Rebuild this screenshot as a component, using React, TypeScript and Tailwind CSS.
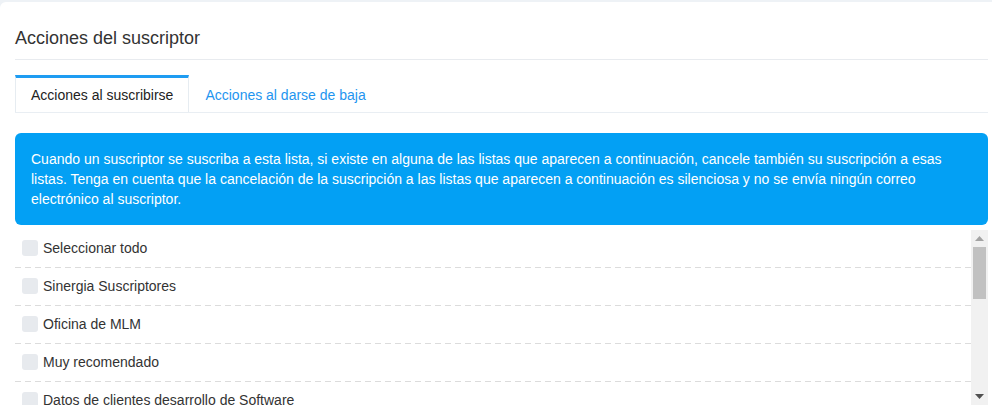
const lists = [
  "Seleccionar todo",
  "Sinergia Suscriptores",
  "Oficina de MLM",
  "Muy recomendado",
  "Datos de clientes desarrollo de Software",
];

export default function App() {
  return (
    <div className="min-h-screen bg-[#eef2f6] pt-[2px] font-['Liberation_Sans',Arial,sans-serif] text-[#333]">
      <div className="h-[417px] overflow-hidden rounded-tl-md bg-white pl-[15px] pr-[4px] pt-[24px]">
        {/* Title */}
        <div className="border-b border-[#e8ebef] pb-[9px]">
          <h2 className="text-[18px] leading-6 text-[#333]">Acciones del suscriptor</h2>
        </div>

        {/* Tabs */}
        <div className="mt-[15px] flex border-b border-[#e9eef3] text-[14px] leading-5">
          <div className="border-x border-t-[3px] border-[#e6ecf1] border-t-[#1e9cf2] px-[15px] py-[7px] text-[#222]">
            Acciones al suscribirse
          </div>
          <div className="px-4 pt-[10px] pb-[7px] text-[#1e95ef]">Acciones al darse de baja</div>
        </div>

        {/* Info alert */}
        <div className="mt-5 rounded-md bg-[#03a0f4] p-4 text-[14px] leading-5 text-white">
          Cuando un suscriptor se suscriba a esta lista, si existe en alguna de las listas que aparecen a continuación, cancele también su suscripción a esas listas. Tenga en cuenta que la cancelación de la suscripción a las listas que aparecen a continuación es silenciosa y no se envía ningún correo electrónico al suscriptor.
        </div>

        {/* List with scrollbar */}
        <div className="mt-[5px] flex h-[175px]">
          <div className="flex-1 overflow-hidden">
            {lists.map((name) => (
              <div key={name}>
                <div className="flex h-[37px] items-center gap-[5px] pb-px pl-[7px] text-[14px]">
                  <span className="h-4 w-4 rounded-[3px] bg-[#e7eaee]" />
                  <span>{name}</span>
                </div>
                <div className="h-px bg-[repeating-linear-gradient(90deg,#dcdcdc_0_6px,transparent_6px_10px)]" />
              </div>
            ))}
          </div>
          <div className="flex w-[17px] flex-col items-center bg-[#f1f1f1]">
            <div className="flex h-[17px] w-full items-center justify-center">
              <svg width="9" height="5" viewBox="0 0 9 5">
                <path d="M0 5 L4.5 0 L9 5 Z" fill="#a3a3a3" />
              </svg>
            </div>
            <div className="h-[52px] w-[13px] bg-[#c1c1c1]" />
            <div className="flex-1" />
            <div className="flex h-[17px] w-full items-center justify-center">
              <svg width="9" height="5" viewBox="0 0 9 5">
                <path d="M0 0 L9 0 L4.5 5 Z" fill="#505050" />
              </svg>
            </div>
          </div>
        </div>
      </div>
    </div>
  );
}
